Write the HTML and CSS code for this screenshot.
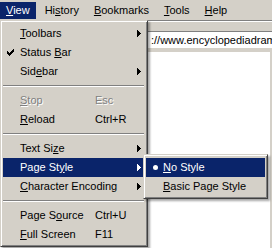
FILE: index.html
```html
<!DOCTYPE html>
<html lang="en">
<head>
    <meta charset="UTF-8">
    <title>View menu</title>
    <link rel="stylesheet" href="styles.css">
</head>
<body>

    <div class="menubar">
        <span class="open"><u>V</u>iew</span>
        <span>Hi<u>s</u>tory</span>
        <span><u>B</u>ookmarks</span>
        <span><u>T</u>ools</span>
        <span><u>H</u>elp</span>
    </div>

    <div class="toolbar">
        <div class="url">://www.encyclopediadramatica.com/Main_Page</div>
    </div>

    <div class="page"></div>

    <div class="menu">
        <div class="item"><span></span><span><u>T</u>oolbars</span><span></span><span class="arrow"><svg width="4" height="7"><path d="M0 0h1v1h1v1h1v1h1v1h-1v1h-1v1h-1v1h-1z"/></svg></span></div>
        <div class="item">
            <span class="mark"><svg width="7" height="7"><rect x="0" y="2" width="1" height="3"/><rect x="1" y="3" width="1" height="3"/><rect x="2" y="4" width="1" height="3"/><rect x="3" y="3" width="1" height="3"/><rect x="4" y="2" width="1" height="3"/><rect x="5" y="1" width="1" height="3"/><rect x="6" y="0" width="1" height="3"/></svg></span>
            <span>Status <u>B</u>ar</span><span></span><span></span>
        </div>
        <div class="item"><span></span><span>Sid<u>e</u>bar</span><span></span><span class="arrow"><svg width="4" height="7"><path d="M0 0h1v1h1v1h1v1h1v1h-1v1h-1v1h-1v1h-1z"/></svg></span></div>
        <div class="sep"></div>
        <div class="item off"><span></span><span><u>S</u>top</span><span>Esc</span><span></span></div>
        <div class="item"><span></span><span><u>R</u>eload</span><span>Ctrl+R</span><span></span></div>
        <div class="sep"></div>
        <div class="item"><span></span><span>Text Si<u>z</u>e</span><span></span><span class="arrow"><svg width="4" height="7"><path d="M0 0h1v1h1v1h1v1h1v1h-1v1h-1v1h-1v1h-1z"/></svg></span></div>
        <div class="item hot">
            <span></span><span>Page St<u>y</u>le</span><span></span><span class="arrow"><svg width="4" height="7"><path d="M0 0h1v1h1v1h1v1h1v1h-1v1h-1v1h-1v1h-1z"/></svg></span>
            <div class="submenu">
                <div class="subitem hot"><span class="bullet"></span><span><u>N</u>o Style</span></div>
                <div class="subitem"><span></span><span><u>B</u>asic Page Style</span></div>
            </div>
        </div>
        <div class="item"><span></span><span><u>C</u>haracter Encoding</span><span></span><span class="arrow"><svg width="4" height="7"><path d="M0 0h1v1h1v1h1v1h1v1h-1v1h-1v1h-1v1h-1z"/></svg></span></div>
        <div class="sep"></div>
        <div class="item"><span></span><span>Page S<u>o</u>urce</span><span>Ctrl+U</span><span></span></div>
        <div class="item"><span></span><span><u>F</u>ull Screen</span><span>F11</span><span></span></div>
    </div>

</body>
</html>
```

FILE: styles.css
```css
body {
    margin: 0;
    width: 272px;
    height: 248px;
    overflow: hidden;
    position: relative;
    background: #fff;
    font-family: "Liberation Sans", Arial, sans-serif;
    font-size: 11px;
    color: #000;
}

u {
    text-underline-offset: 1px;
}

.menubar {
    display: flex;
    height: 20px;
    padding-top: 2px;
    box-sizing: border-box;
    background: #d4d0c8;
}

.menubar span {
    height: 17px;
    line-height: 17px;
    padding: 0 6px;
    margin-right: 3px;
}

.menubar .open {
    background: #0a246a;
    color: #fff;
}

.toolbar {
    height: 32px;
    box-sizing: border-box;
    padding: 10px 0 3px 0;
    background: #d4d0c8;
    border-top: 1px solid #808080;
    box-shadow: inset 0 1px #fff;
}

.url {
    height: 18px;
    box-sizing: border-box;
    margin-left: 146px;
    padding-left: 4px;
    line-height: 16px;
    white-space: nowrap;
    overflow: hidden;
    background: #fff;
    border-top: 1px solid #808080;
    border-left: 1px solid #808080;
    border-bottom: 1px solid #d4d0c8;
}

.page {
    height: 196px;
    box-sizing: border-box;
    border-right: 2px solid #d4d0c8;
}

.menu, .submenu {
    position: absolute;
    box-sizing: border-box;
    background: #d4d0c8;
    color: #000;
    border: 1px solid;
    border-color: #d4d0c8 #404040 #404040 #d4d0c8;
    box-shadow: inset 1px 1px #fff, inset -1px -1px #808080, 2px 2px 2px rgba(0, 0, 0, 0.35);
}

.menu {
    top: 20px;
    left: 0;
    width: 148px;
    padding: 3px 2px 2px 2px;
}

.item {
    position: relative;
    display: grid;
    grid-template-columns: 17px 75px 1fr 10px;
    height: 19px;
    line-height: 19px;
    white-space: nowrap;
}

.hot {
    background: #0a246a;
    color: #fff;
}

.mark {
    display: flex;
    align-items: center;
    padding-left: 4px;
}

.arrow {
    display: flex;
    align-items: center;
    padding-left: 2px;
}

svg {
    fill: currentColor;
    display: block;
}

.off {
    color: #808080;
    text-shadow: 1px 1px 0 #fff;
}

.sep {
    height: 2px;
    margin: 4px 1px 4px 0;
    border-top: 1px solid #808080;
    border-bottom: 1px solid #fff;
    box-sizing: border-box;
}

.submenu {
    left: 140px;
    top: -4px;
    width: 125px;
    padding: 3px 2px 2px 2px;
}

.subitem {
    display: grid;
    grid-template-columns: 17px 1fr;
    height: 19px;
    line-height: 19px;
    white-space: nowrap;
}

.bullet {
    display: flex;
    align-items: center;
    padding-left: 7px;
}

.bullet::before {
    content: "";
    width: 5px;
    height: 5px;
    border-radius: 50%;
    background: #fff;
}
```
